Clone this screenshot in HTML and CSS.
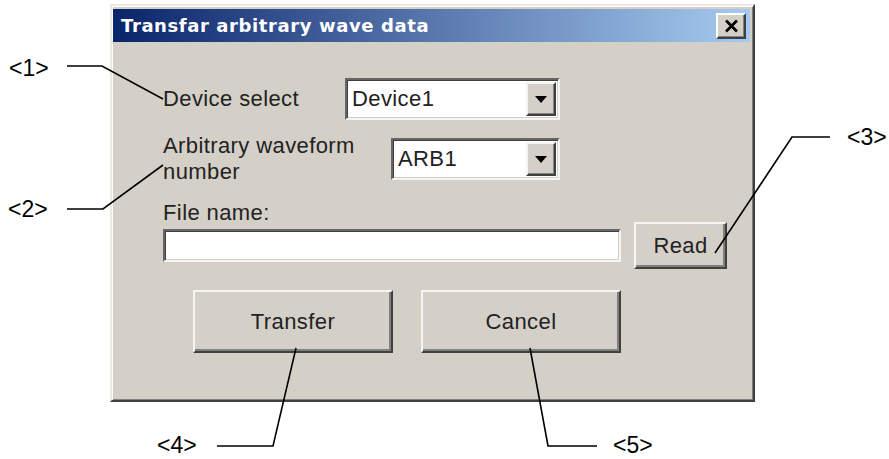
FILE: index.html
```html
<!DOCTYPE html>
<html lang="en">

<head>
	<meta charset="UTF-8">
	<meta name="viewport" content="width=device-width, initial-scale=1.0">
	<title>Transfar arbitrary wave data</title>
	<link rel="stylesheet" href="styles.css">
</head>

<body>

	<div class="canvas">
		<div class="dialog">
			<div class="titlebar">
				<span class="title">Transfar arbitrary wave data</span>
				<button class="close" type="button" aria-label="Close">
					<svg width="15" height="14" viewBox="0 0 15 14">
						<path d="M2 1.5 L13 12.5 M13 1.5 L2 12.5" stroke="#000" stroke-width="2.8" />
					</svg>
				</button>
			</div>

			<div class="dialog-body">
				<div class="row row-device">
					<label class="field-label label-device">Device select</label>
					<div class="combo combo-device">
						<span class="combo-value">Device1</span>
						<span class="combo-btn">
							<svg width="12" height="7" viewBox="0 0 12 7"><path d="M0 0 H12 L6 7 Z" fill="#000" /></svg>
						</span>
					</div>
				</div>

				<div class="row row-arb">
					<label class="field-label label-arb">Arbitrary waveform<br>number</label>
					<div class="combo combo-arb">
						<span class="combo-value">ARB1</span>
						<span class="combo-btn">
							<svg width="12" height="7" viewBox="0 0 12 7"><path d="M0 0 H12 L6 7 Z" fill="#000" /></svg>
						</span>
					</div>
				</div>

				<label class="file-label" for="fileName">File name:</label>
				<div class="row row-file">
					<input class="text-field" type="text" id="fileName">
					<button class="btn btn-read" type="button">Read</button>
				</div>

				<div class="row row-actions">
					<button class="btn btn-action" type="button">Transfer</button>
					<button class="btn btn-action" type="button">Cancel</button>
				</div>
			</div>
		</div>

		<!-- callout numbers and leader lines -->
		<svg class="callouts" width="889" height="459" viewBox="0 0 889 459">
			<g fill="none" stroke="#000" stroke-width="1.6">
				<polyline points="67,66 102,66 163,99" />
				<polyline points="67,209 103,209 163,165" />
				<polyline points="715,253 792,137 830,137" />
				<polyline points="296,348 273,446 217,446" />
				<polyline points="530,348 548,446 597,446" />
			</g>
			<g class="callout-text">
				<text x="9" y="76">&lt;1&gt;</text>
				<text x="8" y="217">&lt;2&gt;</text>
				<text x="847" y="145">&lt;3&gt;</text>
				<text x="157" y="453">&lt;4&gt;</text>
				<text x="613" y="453">&lt;5&gt;</text>
			</g>
		</svg>
	</div>

</body>

</html>
```

FILE: styles.css
```css
/* Basic reset */
* {
	margin: 0;
	padding: 0;
	box-sizing: border-box;
}

body {
	background-color: #fff;
	font-family: "Liberation Sans", Arial, sans-serif;
	color: #222;
}

.canvas {
	position: relative;
	width: 889px;
	height: 459px;
	overflow: hidden;
}

/* Window frame */
.dialog {
	margin: 4px 0 0 110px;
	width: 645px;
	height: 398px;
	padding: 3px 3px 3px 1px;
	background-color: #d4d0c8;
	border: 2px solid;
	border-color: #ece9e3 #404040 #404040 #ece9e3;
	box-shadow: inset 1px 1px #fff, inset -1px -1px #808080;
}

.titlebar {
	display: flex;
	align-items: center;
	height: 33px;
	padding: 0 4px 0 8px;
	background: linear-gradient(to right, #0a246a, #a6caf0);
}

.title {
	flex: 1;
	color: #fff;
	font-family: "DejaVu Sans", Verdana, sans-serif;
	font-weight: bold;
	font-size: 18px;
	letter-spacing: 0.6px;
}

.close {
	display: flex;
	justify-content: center;
	align-items: center;
	width: 30px;
	height: 26px;
	background-color: #d4d0c8;
	border: 2px solid;
	border-color: #fff #404040 #404040 #fff;
	box-shadow: inset -1px -1px #808080;
}

/* Form area */
.dialog-body {
	padding-left: 50px;
	font-size: 22px;
	letter-spacing: 0.4px;
}

.row {
	display: flex;
	align-items: center;
}

.row-device {
	margin-top: 36px;
	height: 42px;
}

.row-arb {
	margin-top: 13px;
	height: 52px;
}

.field-label {
	line-height: 26px;
}

.label-device {
	width: 182px;
}

.label-arb {
	width: 228px;
}

.combo {
	display: flex;
	height: 42px;
	padding: 2px;
	background-color: #fff;
	border: 2px solid;
	border-color: #666 #f4f4f4 #f4f4f4 #666;
	box-shadow: inset 1px 1px #404040, inset -1px -1px #d4d0c8;
}

.combo-device {
	width: 215px;
}

.combo-arb {
	width: 169px;
}

.combo-value {
	flex: 1;
	padding-left: 3px;
	line-height: 34px;
}

.combo-btn {
	display: flex;
	justify-content: center;
	align-items: center;
	width: 30px;
	background-color: #d4d0c8;
	border: 2px solid;
	border-color: #f4f4f4 #404040 #404040 #f4f4f4;
	box-shadow: inset -1px -1px #808080;
}

.file-label {
	display: block;
	height: 19px;
	margin-top: 18px;
	line-height: 20px;
}

.row-file {
	gap: 13px;
	height: 47px;
}

.text-field {
	width: 458px;
	height: 33px;
	background-color: #fff;
	border: 2px solid;
	border-color: #666 #f4f4f4 #f4f4f4 #666;
	box-shadow: inset 1px 1px #404040, inset -1px -1px #d4d0c8;
	outline: none;
}

.btn {
	background-color: #d4d0c8;
	border: 2px solid;
	border-color: #f4f4f4 #404040 #404040 #f4f4f4;
	box-shadow: inset -2px -2px #808080;
	font-family: "Liberation Sans", Arial, sans-serif;
	font-size: 22px;
	letter-spacing: 0.4px;
	color: #222;
}

.btn-read {
	width: 93px;
	height: 47px;
}

.row-actions {
	margin-top: 21px;
	padding-left: 30px;
	gap: 28px;
}

.btn-action {
	width: 200px;
	height: 63px;
}

/* Callouts drawn over the picture */
.callouts {
	position: absolute;
	top: 0;
	left: 0;
	pointer-events: none;
}

.callout-text {
	font-family: "Liberation Sans", Arial, sans-serif;
	font-size: 23px;
	fill: #000;
}
```
